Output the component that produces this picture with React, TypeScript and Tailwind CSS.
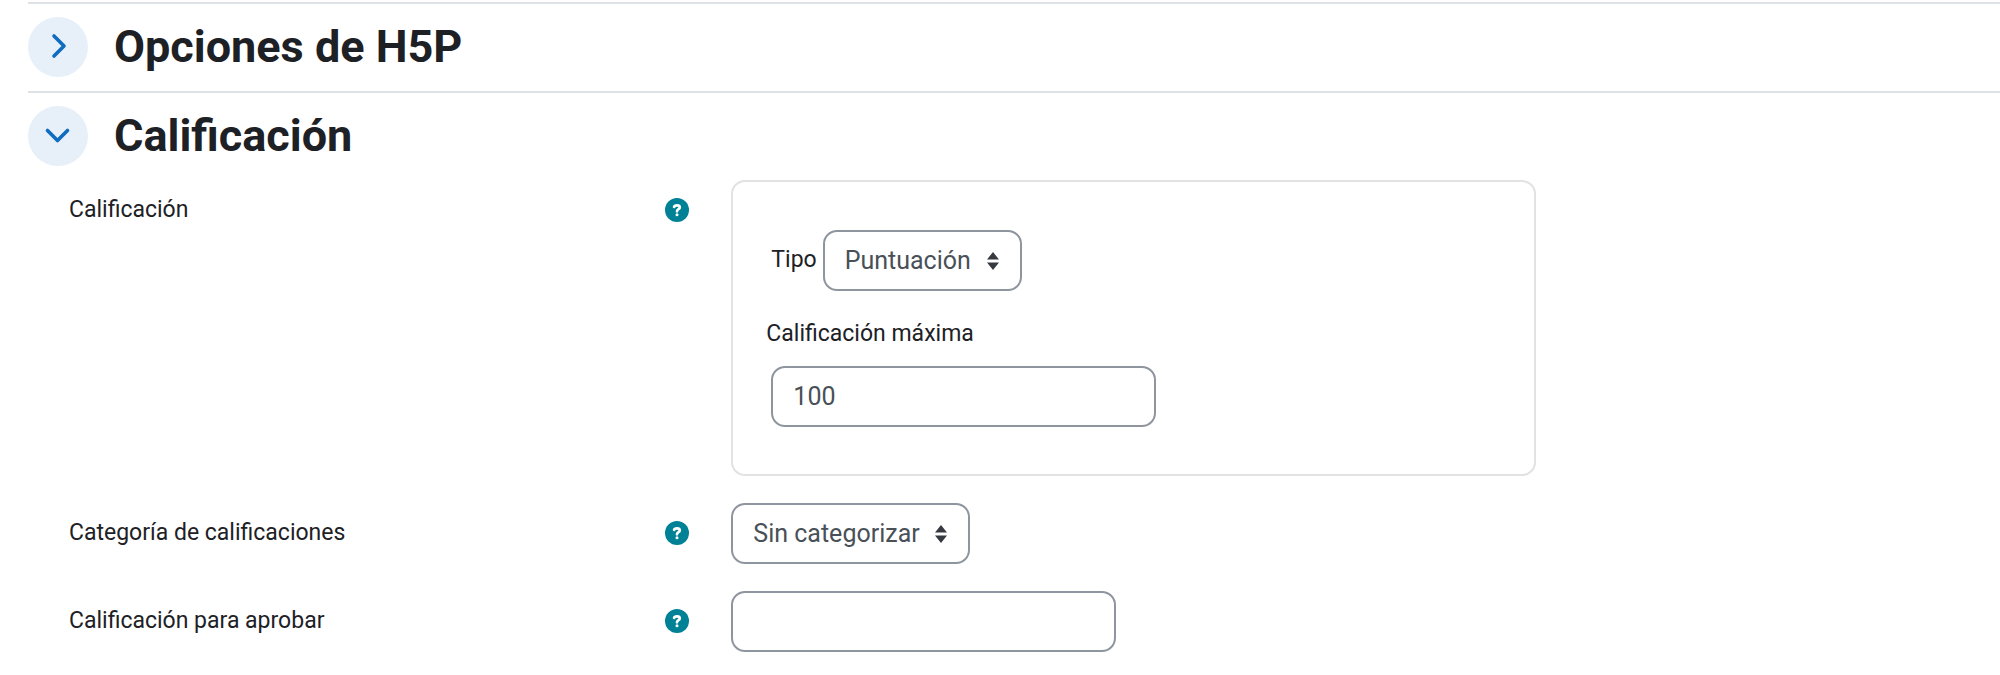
import { useState } from 'react';
import type { ReactNode } from 'react';

const fieldClass = 'block h-[61px] rounded-[14px] border-2 border-[#8f959e] bg-white text-[25px] text-[#495057]';

interface SectionHeaderProps {
    title: string;
    open: boolean;
    onToggle: () => void;
}

const SectionHeader = ({ title, open, onToggle }: SectionHeaderProps) => (
    <div className="flex items-center gap-[26px] pt-[13px] pb-[14px]">
        <button
            type="button"
            aria-label={title}
            aria-expanded={open}
            onClick={onToggle}
            className="flex h-15 w-15 shrink-0 items-center justify-center rounded-full bg-[#e7f0f9] text-[#0f6cbf]"
        >
            <svg width="28" height="28" viewBox="0 0 28 28" fill="none" stroke="currentColor" strokeWidth="3.6" strokeLinecap="round" strokeLinejoin="round">
                {open ? <path d="M3.5 8.5 13.5 18.5 23.5 8.5" /> : <path d="M10 3 20 13 10 23" />}
            </svg>
        </button>
        <h3 className="text-[45px] leading-[60px] font-bold">{title}</h3>
    </div>
);

const HelpIcon = () => (
    <svg width="24" height="24" viewBox="0 0 24 24">
        <circle cx="12" cy="12" r="12" fill="#008196" />
        <path
            d="M9.1 8.9C9.3 7.8 10.3 7.3 11.9 7.3 13.6 7.3 14.8 8.1 14.8 9.4 14.8 11.2 12.1 11.2 12 13.3"
            fill="none"
            stroke="#fff"
            strokeWidth="2.7"
            strokeLinecap="round"
            strokeLinejoin="round"
        />
        <circle cx="12" cy="16.8" r="1.5" fill="#fff" />
    </svg>
);

interface FormRowProps {
    label: string;
    htmlFor: string;
    children: ReactNode;
}

const FormRow = ({ label, htmlFor, children }: FormRowProps) => (
    <div className="grid grid-cols-[1fr_2fr] gap-7">
        <div className="flex h-[60px] items-center justify-between pr-[14px]">
            <label htmlFor={htmlFor}>{label}</label>
            <button type="button" aria-label={`Ayuda sobre ${label}`}>
                <HelpIcon />
            </button>
        </div>
        <div>{children}</div>
    </div>
);

const Select = ({ id, options }: { id: string; options: string[] }) => (
    <div className="relative w-fit">
        <select id={id} className={`${fieldClass} appearance-none pr-12 pl-5`}>
            {options.map((o) => (
                <option key={o}>{o}</option>
            ))}
        </select>
        <svg className="pointer-events-none absolute top-[21px] right-[23px] text-[#343a40]" width="12" height="20" viewBox="0 0 12 20" fill="currentColor">
            <path d="M6 1 12 8.5H0zM6 19 0 11.5h12z" />
        </svg>
    </div>
);

const App = () => {
    const [h5pOpen, setH5pOpen] = useState(false);
    const [gradeOpen, setGradeOpen] = useState(true);

    return (
        <form className="bg-white pt-[2px] pl-7 font-[Roboto,sans-serif] text-[23px] text-[#1d2125]">
            <section className="border-t-2 border-[#dee2e6]">
                <SectionHeader title="Opciones de H5P" open={h5pOpen} onToggle={() => setH5pOpen(!h5pOpen)} />
            </section>

            <section className="border-t-2 border-[#dee2e6]">
                <SectionHeader title="Calificación" open={gradeOpen} onToggle={() => setGradeOpen(!gradeOpen)} />
                {gradeOpen && (
                    <div className="space-y-[27px] pl-[41px]">
                        <FormRow label="Calificación" htmlFor="tipo">
                            <div className="w-full max-w-[805px] rounded-[14px] border-2 border-[#e2e2e2] px-[33px] pt-12 pb-[47px]">
                                <div className="flex items-center gap-[6px] px-[5px]">
                                    <label htmlFor="tipo">Tipo</label>
                                    <Select id="tipo" options={['Puntuación']} />
                                </div>
                                <label htmlFor="maxima" className="mt-[25px] mb-[14px] block leading-9">
                                    Calificación máxima
                                </label>
                                <div className="px-[5px]">
                                    <input id="maxima" type="text" defaultValue="100" className={`${fieldClass} w-[385px] px-5`} />
                                </div>
                            </div>
                        </FormRow>
                        <FormRow label="Categoría de calificaciones" htmlFor="categoria">
                            <Select id="categoria" options={['Sin categorizar']} />
                        </FormRow>
                        <FormRow label="Calificación para aprobar" htmlFor="aprobar">
                            <input id="aprobar" type="text" className={`${fieldClass} w-[385px] px-5`} />
                        </FormRow>
                    </div>
                )}
            </section>
        </form>
    );
};

export default App;
